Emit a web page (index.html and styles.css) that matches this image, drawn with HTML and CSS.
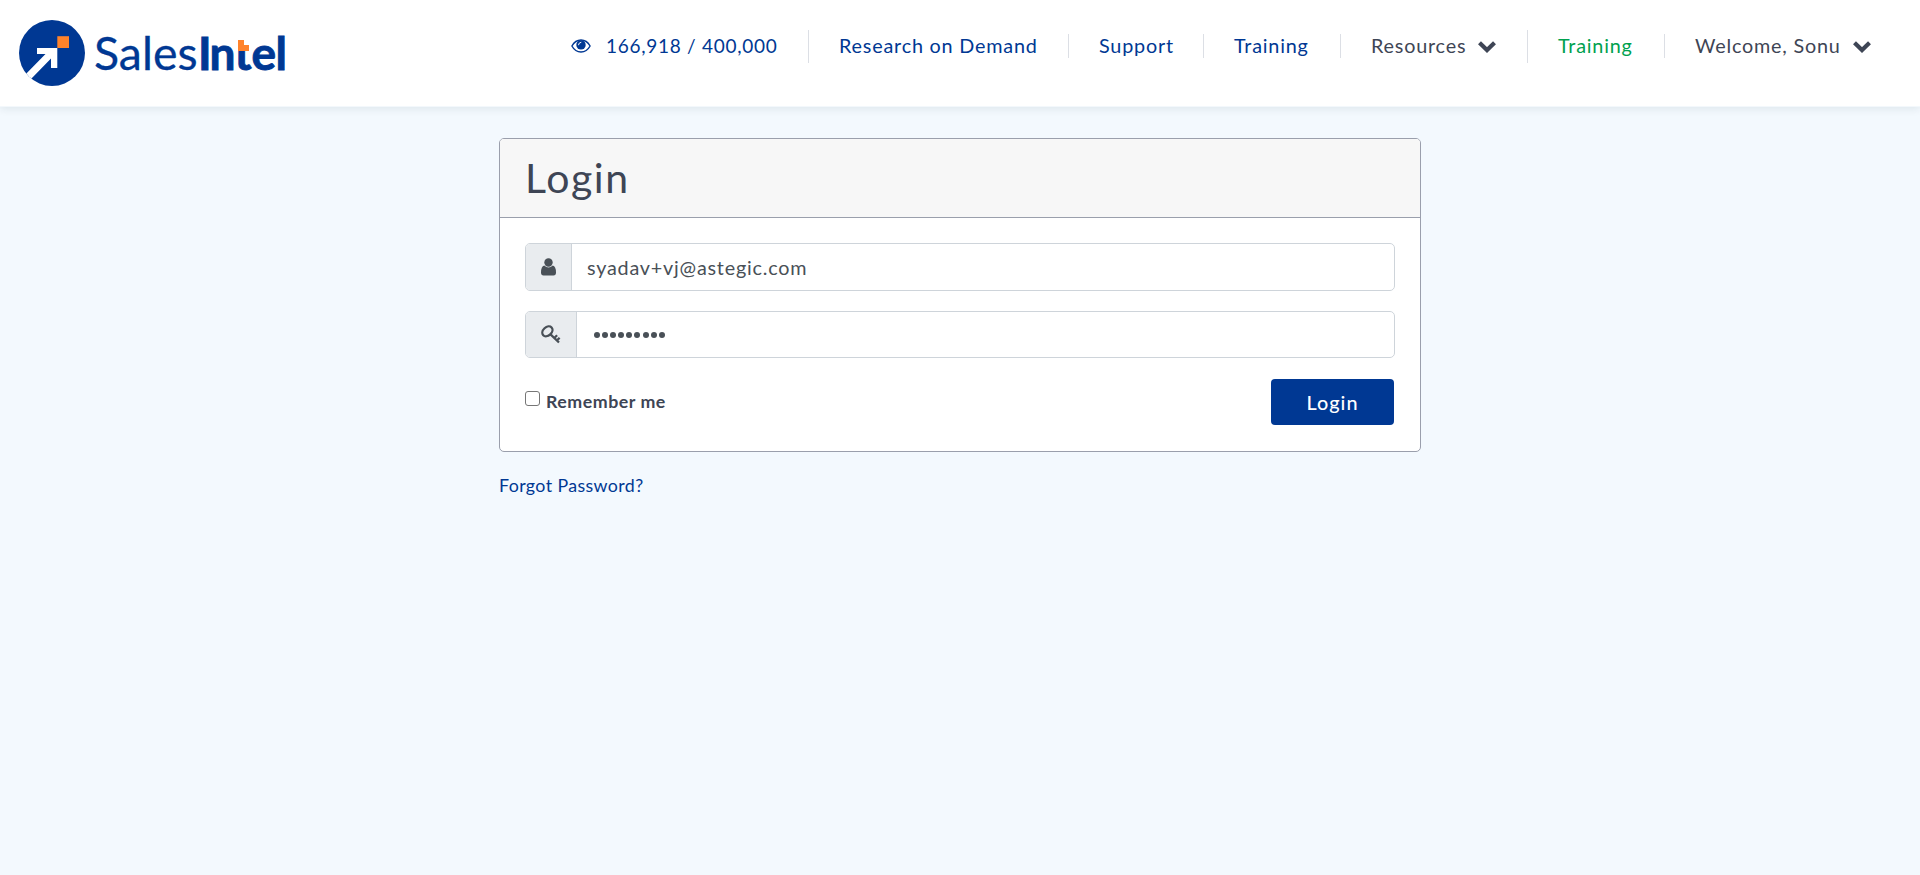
FILE: index.html
```html
<!DOCTYPE html>
<html lang="en">
<head>
<meta charset="utf-8">
<title>SalesIntel Login</title>
<link rel="stylesheet" href="styles.css">
</head>
<body>
<header class="topbar">
  <a class="brand" aria-label="SalesIntel">
    <svg width="272" height="70" viewBox="17 18 272 70">
      <defs>
        <clipPath id="disc"><circle cx="52" cy="53" r="33"/></clipPath>
        <clipPath id="stem"><path d="M230 51h30v30h-30z"/></clipPath>
      </defs>
      <circle cx="52" cy="53" r="33" fill="#003893"/>
      <path clip-path="url(#disc)" fill="#fff" d="M37 48h20.3v20h-6.3v-9.6L31.500 78.500 26 84 21 79 45.500 54H37z"/>
      <path fill="#ff832b" d="M57.300 36.200h11.700V48H57.300z"/>
      <text class="logo-text" x="94" y="70" textLength="103.500" lengthAdjust="spacingAndGlyphs">Sales</text>
      <text class="logo-text logo-bold" y="70" x="198 209.500">In</text>
      <text class="logo-text logo-bold" y="70" x="234.500" clip-path="url(#stem)">t</text>
      <text class="logo-text logo-bold" y="70" x="251.500 275.500">el</text>
      <path fill="#ff832b" d="M238 40h6v5h5v6h-11z"/>
    </svg>
  </a>
  <nav class="nav">
    <a class="item views"><svg class="eye" viewBox="0 0 20 14" width="20" height="14"><path fill="none" stroke="currentColor" stroke-width="1.400" d="M.9 7C5.300-1 14.700-1 19.100 7 14.700 15 5.300 15 .9 7z"/><circle cx="10" cy="5.900" r="4.700" fill="currentColor"/><path d="M7.500 5.800Q7.600 3.500 9.900 3.300" fill="none" stroke="#fff" stroke-width="1" stroke-linecap="round"/></svg><span class="t-count">166,918 / 400,000</span></a>
    <a class="item research"><span>Research on Demand</span></a>
    <a class="item support"><span>Support</span></a>
    <a class="item training"><span>Training</span></a>
    <a class="item resources dark"><span>Resources</span><svg class="chev" viewBox="0 0 18 12" width="18" height="12"><path fill="none" stroke="currentColor" stroke-width="4.200" d="M1.500 1.800 9 9l7.500-7.200"/></svg></a>
    <a class="item training2"><span>Training</span></a>
    <a class="item welcome dark"><span>Welcome, Sonu</span><svg class="chev" viewBox="0 0 18 12" width="18" height="12"><path fill="none" stroke="currentColor" stroke-width="4.200" d="M1.500 1.800 9 9l7.500-7.200"/></svg></a>
  </nav>
</header>
<main class="page">
  <section class="card">
    <h1 class="card-head"><span>Login</span></h1>
    <form class="card-body">
      <div class="field">
        <span class="addon"><svg viewBox="0 0 15 18" width="15" height="18"><circle cx="7.500" cy="4.500" r="4.200" fill="currentColor"/><path fill="currentColor" d="M3.200 7.500Q7.500 11.500 11.800 7.500 15 8.300 15 14.500 15 17.500 12.500 17.500h-10Q0 17.500 0 14.500 0 8.300 3.200 7.500z"/></svg></span>
        <div class="input"><span class="t-email">syadav+vj@astegic.com</span></div>
      </div>
      <div class="field second">
        <span class="addon key"><svg viewBox="0 0 20 19" width="20" height="19"><g fill="none" stroke="currentColor" stroke-width="2.300"><ellipse cx="6.400" cy="6.300" rx="5.700" ry="4.200" transform="rotate(-43 6.400 6.300)"/><path d="M9 8.800l9 8.700M13.300 13l2.800-2.800M15.800 15.600l2.800-2.800"/></g></svg></span>
        <div class="input pass"><i></i><i></i><i></i><i></i><i></i><i></i><i></i><i></i><i></i></div>
      </div>
      <div class="actions">
        <label class="remember"><span class="box"></span><span>Remember me</span></label>
        <button class="submit" type="button">Login</button>
      </div>
    </form>
  </section>
  <a class="forgot">Forgot Password?</a>
</main>
</body>
</html>
```
FILE: styles.css
```css
* { box-sizing: border-box; }
body { margin: 0; min-height: 875px; background: #f3f9fe; color: #3e4555; font-family: Lato, "Noto Sans", sans-serif; font-size: 19px; }
.topbar { display: flex; justify-content: space-between; height: 107px; background: #fff; border-bottom: 1px solid #f3f8fc; box-shadow: 0 2px 8px rgba(0, 40, 60, .09); padding: 18px 20px 0 17px; }
.brand { display: block; height: 70px; }
.logo-text { font-family: Lato, sans-serif; font-size: 46px; fill: #003893; stroke: #003893; stroke-width: .3px; }
.logo-bold { font-weight: 700; stroke-width: .9px; }
.nav { display: flex; height: 56px; color: #003893; white-space: nowrap; font-size: 19.8px; letter-spacing: .8px; }
.item { display: flex; align-items: center; height: 24px; margin-top: 16px; border-left: 1px solid #dcdfe5; padding-left: 30px; line-height: 24px; }
.item span { padding-bottom: 2px; }
.item.research, .item.training2 { height: 33px; margin-top: 12px; padding-bottom: 1px; }
.item.views { width: 237px; border-left: 0; padding-left: 0; }
.eye { margin-right: 15px; }
.research { width: 260px; }
.support { width: 135px; }
.training { width: 137px; }
.resources { width: 187px; }
.training2 { width: 137px; color: #00a14f; }
.welcome { width: 236px; }
.dark { color: #3e4555; }
.chev { margin: 2px 0 0 12px; }
.item .t-count { padding-bottom: 0; font-size: 19px; letter-spacing: .72px; }
.page { width: 922px; margin: 31px auto 0; }
.card { height: 314px; border: 1px solid #9a9fac; border-radius: 5px; background: #fff; overflow: hidden; }
.card-head { display: flex; align-items: center; height: 79px; margin: 0; padding: 0 0 2px 25px; border-bottom: 1px solid #9a9fac; background: #f7f7f7; font-size: 41px; font-weight: 400; letter-spacing: 1.6px; }
.card-body { padding: 25px 25px 0; }
.field { display: flex; height: 48px; border: 1px solid #ced4da; border-radius: 5px; overflow: hidden; color: #495057; }
.second { height: 47px; margin-top: 20px; }
.addon { display: flex; align-items: center; justify-content: center; width: 46px; background: #e9ecef; border-right: 1px solid #ced4da; }
.key { width: 51px; padding-bottom: 1px; }
.input { display: flex; align-items: center; padding-left: 15px; }
.t-email { font-size: 19.8px; letter-spacing: .78px; }
.pass { gap: 2.1px; padding-left: 17px; }
.pass i { width: 6px; height: 6px; border-radius: 50%; background: #495057; }
.actions { display: flex; justify-content: space-between; margin-top: 21px; padding-right: 1px; }
.remember { display: flex; font-size: 17.8px; font-weight: 700; line-height: 22px; padding-top: 11px; letter-spacing: .52px; }
.box { width: 15px; height: 15px; margin: 1px 6px 0 0; border: 1px solid #767676; border-radius: 3px; background: #fff; }
.submit { width: 123px; height: 46px; border: 0; border-radius: 4px; background: #003893; color: #fff; font: 500 19.8px Lato, sans-serif; letter-spacing: 1px; }
.forgot { display: inline-block; margin-top: 21px; color: #003893; font-size: 17.8px; line-height: 24px; letter-spacing: .4px; }
```
